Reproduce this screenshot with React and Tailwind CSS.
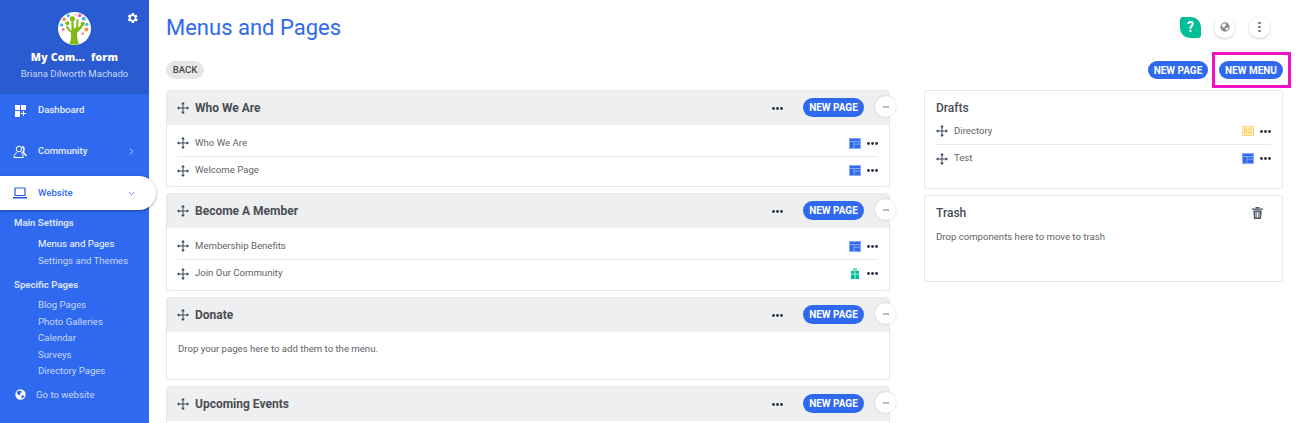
import React from "react";

const Move = ({ className = "" }) => (
  <svg width="12" height="12" viewBox="0 0 13 13" fill="none" className={`shrink-0 ${className}`}>
    <path d="M6.5 2v9M2 6.5h9" stroke="#3b4a5e" strokeWidth="1.100" />
    <path d="M6.5 0 4.500 2.400h4zM6.500 13l-2-2.400h4zM0 6.500l2.400-2v4zM13 6.500l-2.400-2v4z" fill="#2f3e52" />
  </svg>
);

const Dots = ({ className = "" }) => (
  <svg width="11" height="3" viewBox="0 0 11 3" className={`shrink-0 ${className}`} fill="#27303f">
    <circle cx="1.5" cy="1.5" r="1.4" />
    <circle cx="5.5" cy="1.5" r="1.4" />
    <circle cx="9.5" cy="1.5" r="1.4" />
  </svg>
);

const PageIcon = () => (
  <svg width="12" height="11" viewBox="0 0 12 11" className="shrink-0">
    <rect width="12" height="11" fill="#8aa9f8" />
    <rect x="1" y="1" width="10" height="2" fill="#2f69f0" />
    <rect x="1" y="4" width="3.5" height="6" fill="#2f69f0" />
    <rect x="5.5" y="4" width="5.5" height="1.6" fill="#2f69f0" />
    <rect x="5.5" y="6.6" width="5.5" height="3.400" fill="#2f69f0" />
  </svg>
);

const YellowIcon = () => (
  <svg width="12" height="10" viewBox="0 0 12 10" className="shrink-0">
    <rect width="12" height="10" rx="1" fill="#fbd777" />
    <rect x="1" y="1" width="10" height="8" fill="#fff0c4" />
    <rect x="2" y="2.4" width="3" height="5.2" fill="#fbd777" />
    <rect x="6" y="2.4" width="4" height="1.6" fill="#fbd777" />
    <rect x="6" y="5.4" width="4" height="1.6" fill="#fbd777" />
  </svg>
);

const GreenIcon = () => (
  <svg width="8" height="11" viewBox="0 0 8 11" className="shrink-0">
    <rect x="2" y="0" width="4" height="3" fill="#7fdcc4" />
    <rect x="0" y="3" width="8" height="8" fill="#00bf98" />
    <rect x="0" y="5.6" width="8" height="1" fill="#b5ecdf" />
    <rect x="3.5" y="3" width="1" height="8" fill="#b5ecdf" />
  </svg>
);

const Globe = ({ size = 14, bg = "#fff", fg = "#2f69f0" }) => (
  <svg width={size} height={size} viewBox="0 0 14 14" className="shrink-0">
    <circle cx="7" cy="7" r="6.6" fill={bg} />
    <path d="M3.500 2.500 8 2.200 8.500 4 6.500 6l-.5 2.500L4 7 2.200 5.500zM8 8.400l3.800-.6-.9 3-2.500 1.200z" fill={fg} />
  </svg>
);

const Pill = ({ children, className = "" }) => (
  <span className={`flex items-center justify-center rounded-full bg-[#2f69f0] text-[10px] font-bold uppercase text-white ${className}`}>
    {children}
  </span>
);

const Row = ({ label, icon, border }) => (
  <div className={`flex h-[27px] items-center ${border ? "border-b border-[#e9eaec]" : ""}`}>
    <Move />
    <span className="ml-[6px] text-[9.6px] text-[#5f6368]">{label}</span>
    <span className="ml-auto flex w-[12px] justify-center">{icon}</span>
    <Dots className="ml-[6px]" />
  </div>
);

const MenuCard = ({ title, rows, empty, bodyH }) => (
  <section className="relative rounded-[3px] border border-[#e6e7e9] bg-white">
    <div className="flex h-[34px] items-center rounded-t-[3px] bg-[#eeeff1] pl-[10px] pr-[25px]">
      <Move />
      <h2 className="ml-[6px] text-[12px] font-bold text-[#4a4d52]">{title}</h2>
      <Dots className="ml-auto mr-[20px]" />
      <Pill className="mb-[2px] h-[19px] w-[61px]">New Page</Pill>
    </div>
    <div className={`${bodyH} pl-[10px] pr-[11px]`}>
      {rows &&
        <div className="pt-[5px]">
          {rows.map((r, i) => (
            <Row key={r.label} label={r.label} icon={r.icon} border={i < rows.length - 1} />
          ))}
        </div>}
      {empty && <p className="pt-[10px] pl-[1px] text-[9.6px] text-[#5f6368]">{empty}</p>}
    </div>
    <span className="absolute right-[-7px] top-[5px] flex h-[21px] w-[21px] items-center justify-center rounded-full bg-white shadow-[0_0_2px_rgba(0,0,0,0.2)]">
      <span className="h-[2px] w-[6px] bg-[#bdbdbd]" />
    </span>
  </section>
);

const SubLink = ({ children, active }) => (
  <a className={`block h-[16.5px] pl-[38px] text-[9.6px] leading-[16.5px] ${active ? "text-white" : "text-[#c9d8fb]"}`}>{children}</a>
);

const Tree = () => (
  <svg width="33" height="33" viewBox="0 0 32 32" className="block">
    <circle cx="16" cy="16" r="16" fill="#fff" />
    <path d="M11 31.500c1.500-4 2-8 1.500-11.500-2-1.500-4-3.500-5-6.500l2.500.5c1 2 2 3.500 3 4.500L13 9h2l.5 7 2-1 .5-8h2l-.5 8.500 3-3.500 1.500 1.500c-1.500 3-4 5-5.500 6.500-.3 4 .5 8 2 11.500z" fill="#84b816" />
    <circle cx="14" cy="6.500" r="2.500" fill="#84b816" />
    <circle cx="9" cy="11" r="2" fill="#84b816" />
    <circle cx="24" cy="11.500" r="2" fill="#84b816" />
    <circle cx="6" cy="7" r="1.700" fill="#f78c3c" />
    <circle cx="10" cy="3.500" r="1.500" fill="#35b4ea" />
    <circle cx="21" cy="3.500" r="1.700" fill="#ef5aa8" />
    <circle cx="25" cy="6.500" r="1.800" fill="#35b4ea" />
    <circle cx="3.500" cy="12.500" r="1.500" fill="#35b4ea" />
    <circle cx="5" cy="17" r="1.300" fill="#ef5aa8" />
    <circle cx="28" cy="12" r="1.500" fill="#35b4ea" />
    <circle cx="27.500" cy="17" r="1.900" fill="#f78c3c" />
    <circle cx="24" cy="21" r="1.100" fill="#ef5aa8" />
    <circle cx="17" cy="2.500" r="1" fill="#f7c53c" />
  </svg>
);

const Sidebar = () => (
  <aside className="relative z-10 h-full w-[149px] shrink-0 bg-[#2f69f0]">
    <div className="relative flex h-[94px] flex-col items-center bg-[#2a5bd0] pt-[12px]">
      <Tree />
      <svg width="14" height="14" viewBox="0 0 24 24" className="absolute left-[125px] top-[11px]" fill="#fff">
        <path fillRule="evenodd" d="M19.400 13a7.600 7.600 0 0 0 0-2l2.100-1.600-2-3.500-2.500 1a7.600 7.600 0 0 0-1.700-1L15.400 3.300h-4l-.4 2.600a7.600 7.600 0 0 0-1.700 1l-2.500-1-2 3.500L6.900 11a7.600 7.600 0 0 0 0 2l-2.100 1.600 2 3.500 2.500-1a7.600 7.600 0 0 0 1.700 1l.4 2.600h4l.4-2.600a7.600 7.600 0 0 0 1.700-1l2.500 1 2-3.500zM13.200 15.500a3.500 3.500 0 1 1 0-7 3.500 3.500 0 0 1 0 7z" />
      </svg>
      <p className="mt-[6px] text-[10.5px] font-extrabold leading-[13px] tracking-[0.2px] text-white [font-family:'Open_Sans',sans-serif]">My Com...&nbsp; form</p>
      <p className="mt-[3px] text-[9.6px] leading-[13px] text-[#c9d8fb]">Briana Dilworth Machado</p>
    </div>
    <nav>
      <a className="flex h-[33px] items-center pl-[15px] text-[9.6px] text-white">
        <svg width="11" height="12" viewBox="0 0 11 12" className="shrink-0" fill="#fff">
          <rect width="5" height="5" /><rect x="6" width="5" height="5" /><rect y="6" width="5" height="6" />
          <path d="M8 6h1v2h2v1H9v2H8V9H6V8h2z" />
        </svg>
        <span className="ml-[12px] font-medium opacity-90">Dashboard</span>
      </a>
      <a className="flex h-[49px] items-center pl-[13px] text-[9.6px] text-white">
        <svg width="14" height="13" viewBox="0 0 14 13" fill="none" stroke="#fff" strokeWidth="1" className="shrink-0">
          <circle cx="6" cy="4" r="2.800" />
          <path d="M1 12.500c0-3 1.500-4.500 3-5M8 7.500c1 .5 2 1.500 2.300 5H1" />
          <path d="M9 1.500a2.800 2.800 0 0 1 2 3c0 1-.5 2-1 2.500l3.500 4" strokeWidth="1.500" />
        </svg>
        <span className="ml-[11px] font-medium opacity-90">Community</span>
        <svg width="5" height="7" viewBox="0 0 5 7" fill="none" stroke="#c9d8fb" className="ml-auto mr-[15px]"><path d="m1 .8 2.800 2.700L1 6.200" /></svg>
      </a>
      <a className="relative flex h-[34px] w-[156px] items-center rounded-r-full bg-white pl-[13px] text-[9.6px] text-[#2f69f0] shadow-[0_1px_3px_rgba(0,0,0,0.35)]">
        <svg width="14" height="12" viewBox="0 0 14 12" fill="none" className="shrink-0">
          <rect x="2" y="1" width="10" height="7.500" rx="0.500" stroke="#2a5bd0" strokeWidth="1.200" />
          <rect y="10" width="14" height="1.500" fill="#2a5bd0" />
        </svg>
        <span className="ml-[11px] font-medium">Website</span>
        <svg width="7" height="5" viewBox="0 0 7 5" fill="none" stroke="#5b87f2" className="ml-auto mr-[21px]"><path d="m.8 1 2.700 2.700L6.200 1" /></svg>
      </a>
    </nav>
    <div className="pt-[5px]">
      <h3 className="h-[16px] pl-[14px] text-[9.6px] font-bold leading-[16px] text-[#d6e1fc]">Main Settings</h3>
      <div className="mt-[5px]">
        <SubLink active>Menus and Pages</SubLink>
        <SubLink>Settings and Themes</SubLink>
      </div>
      <h3 className="mt-[8px] h-[16px] pl-[14px] text-[9.6px] font-bold leading-[16px] text-[#d6e1fc]">Specific Pages</h3>
      <div className="mt-[4px]">
        <SubLink>Blog Pages</SubLink>
        <SubLink>Photo Galleries</SubLink>
        <SubLink>Calendar</SubLink>
        <SubLink>Surveys</SubLink>
        <SubLink>Directory Pages</SubLink>
      </div>
      <a className="mt-[7px] flex items-center pl-[15px] text-[9.6px] leading-[16px] text-[#c9d8fb]">
        <Globe size={11} />
        <span className="ml-[10px]">Go to website</span>
      </a>
    </div>
  </aside>
);

export default function App() {
  return (
    <div className="flex h-[423px] w-[1300px] overflow-hidden bg-white font-['Roboto',sans-serif]">
      <Sidebar />
      <main className="min-w-0 flex-1 pl-[17px] pr-[17px]">
        <header className="flex h-[54px] items-center pr-[13px]">
          <h1 className="relative top-[1px] text-[22px] leading-none text-[#2f69f0]">Menus and Pages</h1>
          <span className="ml-auto flex h-[21px] w-[21px] items-center justify-center rounded-tr-[10px] rounded-bl-[10px] rounded-tl-[3px] rounded-br-[3px] bg-[#00bf98] text-[14px] font-bold text-white">?</span>
          <span className="ml-[13px] flex h-[21px] w-[21px] items-center justify-center rounded-full bg-white shadow-[0_1px_3px_rgba(0,0,0,0.2)]">
            <Globe size={10} bg="#8e8e8e" fg="#fff" />
          </span>
          <span className="ml-[14px] flex h-[21px] w-[21px] flex-col items-center justify-center gap-[1.500px] rounded-full bg-white shadow-[0_1px_3px_rgba(0,0,0,0.2)]">
            <i className="h-[2.500px] w-[2.500px] rounded-full bg-[#777]" />
            <i className="h-[2.500px] w-[2.500px] rounded-full bg-[#777]" />
            <i className="h-[2.500px] w-[2.500px] rounded-full bg-[#777]" />
          </span>
        </header>
        <div className="flex h-[36px] items-start pt-[7px]">
          <span className="flex h-[18px] w-[38px] items-center justify-center rounded-full bg-[#e6e6e6] text-[9.6px] font-medium text-[#4a4a4a]">BACK</span>
          <Pill className="ml-auto h-[18px] w-[60px]">New Page</Pill>
          <span className="relative ml-[11px]">
            <Pill className="h-[18px] w-[64px]">New Menu</Pill>
            <span className="absolute inset-[-9px_-8px_-9px_-7px] border-[3px] border-[#f012c6]" />
          </span>
        </div>
        <div className="flex items-start">
          <div className="flex w-[724px] shrink-0 flex-col gap-[6px]">
            <MenuCard title="Who We Are" bodyH="h-[61px]" rows={[{ label: "Who We Are", icon: <PageIcon /> }, { label: "Welcome Page", icon: <PageIcon /> }]} />
            <MenuCard title="Become A Member" bodyH="h-[62px]" rows={[{ label: "Membership Benefits", icon: <PageIcon /> }, { label: "Join Our Community", icon: <GreenIcon /> }]} />
            <MenuCard title="Donate" bodyH="h-[47px]" empty="Drop your pages here to add them to the menu." />
            <MenuCard title="Upcoming Events" bodyH="h-[40px]" />
          </div>
          <div className="ml-[34px] flex w-[359px] shrink-0 flex-col gap-[6px]">
            <section className="h-[99px] rounded-[3px] border border-[#e6e7e9] bg-white px-[11px] pt-[10px]">
              <h2 className="text-[12px] font-medium leading-[14px] text-[#4a4d52]">Drafts</h2>
              <div className="mt-[3px]">
                <Row label="Directory" icon={<YellowIcon />} border />
                <Row label="Test" icon={<PageIcon />} />
              </div>
            </section>
            <section className="h-[87px] rounded-[3px] border border-[#e6e7e9] bg-white px-[11px] pt-[10px]">
              <div className="flex items-center pr-[8px]">
                <h2 className="text-[12px] font-medium leading-[14px] text-[#4a4d52]">Trash</h2>
                <svg width="11" height="12" viewBox="0 0 11 12" className="ml-auto" fill="#4b5563">
                  <rect x="0" y="1.500" width="11" height="1.300" /><rect x="3.500" y="0" width="4" height="1.500" />
                  <path fillRule="evenodd" d="M1.300 3.400h8.400l-.7 8.600H2zM3.500 5v5.500h.9V5zM5.050 5v5.500h.9V5zM6.600 5v5.500h.9V5z" />
                </svg>
              </div>
              <p className="mt-[10px] text-[9.6px] leading-[13px] text-[#5f6368]">Drop components here to move to trash</p>
            </section>
          </div>
        </div>
      </main>
    </div>
  );
}
